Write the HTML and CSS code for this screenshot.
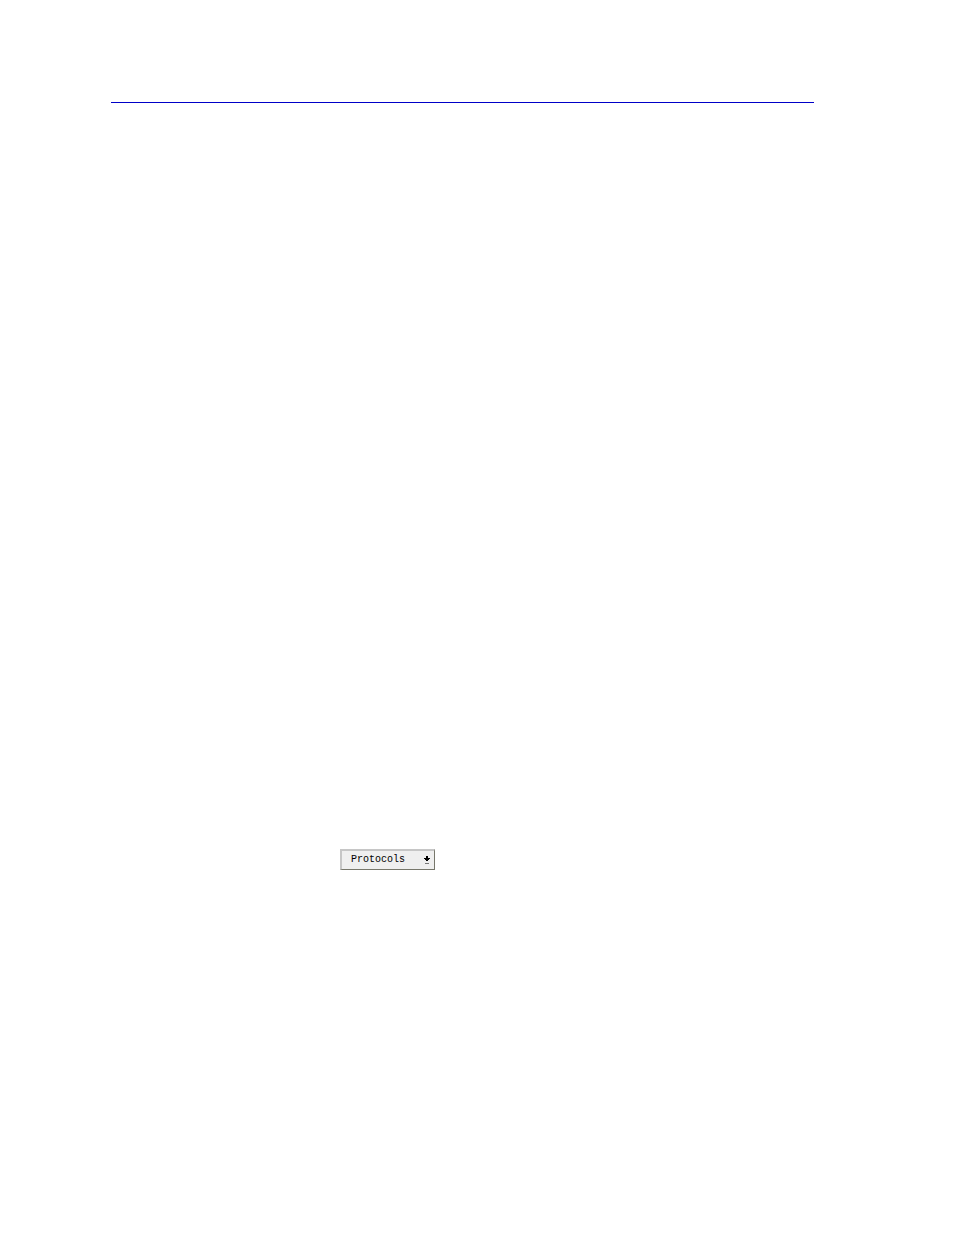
FILE: index.html
```html
<!DOCTYPE html>
<html lang="en">
<head>
  <meta charset="UTF-8" />
  <meta name="viewport" content="width=device-width, initial-scale=1.0" />
  <title>Protocols</title>
  <link rel="stylesheet" href="styles.css">
</head>
<body>
  <main class="page">
    <hr class="page-rule" />

    <div class="menu">
      <select class="menu-select" aria-label="Protocols">
        <option>Protocols</option>
      </select>
      <svg class="menu-arrow" width="6" height="8" viewBox="0 0 6 8" shape-rendering="crispEdges" aria-hidden="true">
        <path d="M2 0h2v2h2v1h-1v1h-1v1h-2v-1h-1v-1h-1v-1h2z" fill="#000" />
        <path d="M1 7h4v1h-4z" fill="#777" />
      </svg>
    </div>
  </main>
</body>
</html>
```

FILE: styles.css
```css
body {
  margin: 0;
  background-color: #fff;
  color: #000;
  font-family: "Liberation Mono", monospace;
}

.page {
  padding: 102px 140px 40px 111px;
}

.page-rule {
  height: 1px;
  margin: 0 0 746px;
  border: none;
  background-color: #0000c8;
}

/* drop-down */
.menu {
  position: relative;
  width: 95px;
  margin-left: 229px;
}
.menu-select {
  appearance: none;
  display: block;
  box-sizing: border-box;
  width: 100%;
  height: 21px;
  margin: 0;
  padding: 0 20px 0 9px;
  border: 1px solid;
  border-width: 2px 1px 1px 2px;
  border-color: #c6c6c6 #77776b #77776b #c6c6c6;
  border-radius: 0;
  background-color: #efefef;
  color: #000;
  font-family: inherit;
  font-size: 10px;
  line-height: 18px;
}
.menu-arrow {
  position: absolute;
  top: 7px;
  right: 5px;
  pointer-events: none;
}
```
